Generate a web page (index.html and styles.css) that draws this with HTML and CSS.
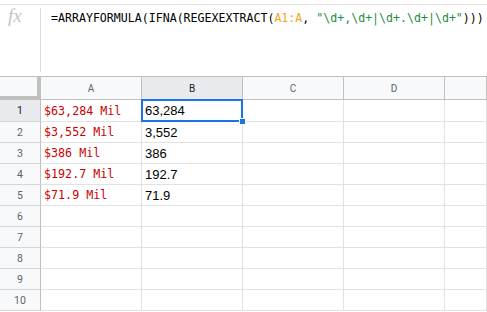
FILE: index.html
```html
<!DOCTYPE html>
<html lang="en">
<head>
    <meta charset="UTF-8">
    <title>Sheet - REGEXEXTRACT</title>
    <link rel="stylesheet" href="styles.css">
</head>
<body>

<!-- Formula bar -->
<div class="formula-bar">
    <div class="fx">fx</div>
    <div class="formula">=ARRAYFORMULA(IFNA(REGEXEXTRACT(<span class="ref">A1:A</span>, <span class="str">"\d+,\d+|\d+.\d+|\d+"</span>)))</div>
</div>

<!-- Grid -->
<div class="grid">
    <div class="corner"></div>
    <div class="col-head">A</div>
    <div class="col-head selected">B</div>
    <div class="col-head">C</div>
    <div class="col-head">D</div>
    <div class="col-head"></div>

    <div class="row-head selected">1</div>
    <div class="cell text-a">$63,284 Mil</div>
    <div class="cell text-b active">63,284<span class="sel-box"></span><span class="handle"></span></div>
    <div class="cell"></div><div class="cell"></div><div class="cell"></div>

    <div class="row-head">2</div>
    <div class="cell text-a">$3,552 Mil</div>
    <div class="cell text-b">3,552</div>
    <div class="cell"></div><div class="cell"></div><div class="cell"></div>

    <div class="row-head">3</div>
    <div class="cell text-a">$386 Mil</div>
    <div class="cell text-b">386</div>
    <div class="cell"></div><div class="cell"></div><div class="cell"></div>

    <div class="row-head">4</div>
    <div class="cell text-a">$192.7 Mil</div>
    <div class="cell text-b">192.7</div>
    <div class="cell"></div><div class="cell"></div><div class="cell"></div>

    <div class="row-head">5</div>
    <div class="cell text-a">$71.9 Mil</div>
    <div class="cell text-b">71.9</div>
    <div class="cell"></div><div class="cell"></div><div class="cell"></div>

    <div class="row-head">6</div>
    <div class="cell"></div><div class="cell"></div><div class="cell"></div><div class="cell"></div><div class="cell"></div>

    <div class="row-head">7</div>
    <div class="cell"></div><div class="cell"></div><div class="cell"></div><div class="cell"></div><div class="cell"></div>

    <div class="row-head">8</div>
    <div class="cell"></div><div class="cell"></div><div class="cell"></div><div class="cell"></div><div class="cell"></div>

    <div class="row-head">9</div>
    <div class="cell"></div><div class="cell"></div><div class="cell"></div><div class="cell"></div><div class="cell"></div>

    <div class="row-head">10</div>
    <div class="cell"></div><div class="cell"></div><div class="cell"></div><div class="cell"></div><div class="cell"></div>
</div>

</body>
</html>
```

FILE: styles.css
```css
* {
    margin: 0;
    padding: 0;
    box-sizing: border-box;
}

body {
    font-family: 'Liberation Sans', Arial, sans-serif;
    background-color: #fff;
    overflow: hidden;
}

/* Formula bar */
.formula-bar {
    display: flex;
    margin-top: 4px;
    height: 72px;
    border-top: 1px solid #e1e1e1;
}

.fx {
    width: 41px;
    height: 64px;
    margin-top: 3px;
    padding-left: 8px;
    border-right: 1px solid #dadce0;
    font-family: 'Liberation Serif', serif;
    font-style: italic;
    font-size: 19px;
    line-height: 16px;
    color: #c4c4c4;
}

.formula {
    padding: 5px 0 0 10px;
    font-family: 'DejaVu Sans Mono', monospace;
    font-size: 11.6px;
    line-height: 16px;
    color: #000;
    white-space: nowrap;
}

.formula .ref {
    color: #f4a31c;
}

.formula .str {
    color: #1e8e3e;
}

/* Grid */
.grid {
    display: grid;
    grid-template-columns: 41px repeat(4, 101px) 1fr;
    grid-template-rows: 23px 22px repeat(9, 21px);
    border-top: 1px solid #c0c0c0;
}

.corner {
    background-color: #f8f9fa;
    border-right: 4px solid #c0c0c0;
    border-bottom: 4px solid #c0c0c0;
}

.col-head {
    background-color: #f8f9fa;
    border-right: 1px solid #c0c0c0;
    border-bottom: 1px solid #c0c0c0;
    font-family: Roboto, sans-serif;
    font-size: 10px;
    color: #5f6368;
    display: flex;
    align-items: center;
    justify-content: center;
}

.row-head {
    background-color: #f8f9fa;
    border-right: 1px solid #c0c0c0;
    border-bottom: 1px solid #d7d7d7;
    font-family: Roboto, sans-serif;
    font-size: 10.5px;
    color: #5f6368;
    display: flex;
    align-items: center;
    justify-content: center;
}

.col-head.selected, .row-head.selected {
    background-color: #e8eaed;
    color: #202124;
}

.cell {
    border-right: 1px solid #e2e2e2;
    border-bottom: 1px solid #e2e2e2;
    display: flex;
    align-items: center;
    padding-left: 3px;
    white-space: nowrap;
}

.text-a {
    font-family: 'DejaVu Sans Mono', monospace;
    font-size: 11.7px;
    color: #cc0000;
}

.text-b {
    font-size: 13px;
    color: #000;
}

.active {
    position: relative;
}

.sel-box {
    position: absolute;
    left: -1px;
    top: -1px;
    right: -1px;
    bottom: -1px;
    border: 2px solid #1a73e8;
}

.handle {
    position: absolute;
    right: -4px;
    bottom: -4px;
    width: 7px;
    height: 7px;
    background-color: #1a73e8;
    border: 1px solid #fff;
}
```
